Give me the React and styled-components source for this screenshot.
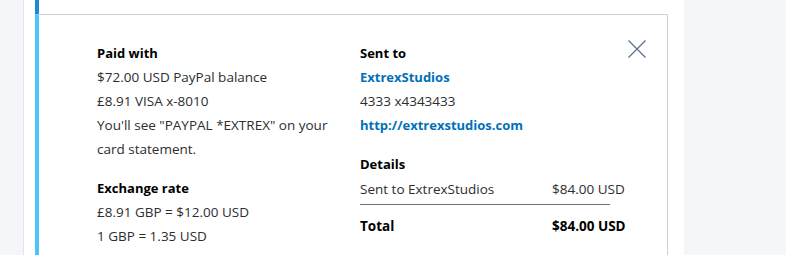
import React from "react";
import styled, { createGlobalStyle } from "styled-components";

const Global = createGlobalStyle`
  html, body { margin: 0; padding: 0; }
  body {
    background: #f5f6fa;
    font-family: "Open Sans", "Noto Sans", sans-serif;
    color: #2c2e2f;
    -webkit-font-smoothing: antialiased;
  }
  * { box-sizing: border-box; }
`;

const Page = styled.div`
  display: flex;
  height: 255px;
  overflow: hidden;
`;

const Main = styled.div`
  margin-left: 23px;
  width: 661px;
  background: #ffffff;
  border-left: 1px solid #e2e5e9;
  padding-left: 11px;
`;

const PrevRow = styled.div`
  height: 14px;
  width: 633px;
  border-left: 4px solid #1b8ad5;
`;

const Panel = styled.div`
  width: 633px;
  border-left: 4px solid #4cc4f8;
  border-top: 1px solid #cbd2d6;
  border-right: 1px solid #cbd2d6;
  padding: 26px 0 40px 58px;
  display: grid;
  grid-template-columns: 263px 268px 18px;
  font-size: 13.5px;
  line-height: 24px;
`;

const Column = styled.div`
  display: flex;
  flex-direction: column;
  padding-right: ${(p) => (p.$wrap ? "20px" : "0")};
`;

const Heading = styled.div`
  font-weight: 700;
  font-size: 13px;
  color: #000;
  margin-top: ${(p) => (p.$spaced ? "15px" : "0")};
  margin-bottom: ${(p) => (p.$tight ? "1px" : "0")};
`;

const Line = styled.div`
  color: #2c2e2f;
`;

const LinkText = styled.a`
  color: #0070ba;
  font-weight: 700;
  font-size: 13px;
  text-decoration: none;
`;

const DetailRow = styled.div`
  display: grid;
  grid-template-columns: 192px auto;
  font-weight: ${(p) => (p.$bold ? 700 : 400)};
  color: ${(p) => (p.$bold ? "#000" : "#2c2e2f")};
`;

const Divider = styled.div`
  width: 250px;
  height: 1px;
  background: #6c7378;
  margin: 3px 0 9px;
`;

const CloseButton = styled.button`
  all: unset;
  width: 18px;
  height: 18px;
  margin-top: -1px;
  cursor: pointer;
  display: block;
  svg { display: block; }
`;

export default function App() {
  return (
    <>
      <Global />
      <Page>
        <Main>
          <PrevRow />
          <Panel>
            <Column $wrap>
              <Heading>Paid with</Heading>
              <Line>$72.00 USD PayPal balance</Line>
              <Line>£8.91 VISA x-8010</Line>
              <Line>You'll see "PAYPAL *EXTREX" on your card statement.</Line>
              <Heading $spaced>Exchange rate</Heading>
              <Line>£8.91 GBP = $12.00 USD</Line>
              <Line>1 GBP = 1.35 USD</Line>
            </Column>
            <Column>
              <Heading>Sent to</Heading>
              <LinkText href="#">ExtrexStudios</LinkText>
              <Line>4333 x4343433</Line>
              <LinkText href="#">http://extrexstudios.com</LinkText>
              <Heading $spaced $tight>Details</Heading>
              <DetailRow>
                <span>Sent to ExtrexStudios</span>
                <span>$84.00 USD</span>
              </DetailRow>
              <Divider />
              <DetailRow $bold>
                <span>Total</span>
                <span>$84.00 USD</span>
              </DetailRow>
            </Column>
            <CloseButton aria-label="Close">
              <svg width="18" height="18" viewBox="0 0 18 18">
                <path d="M0.5 0.5 L17.5 17.5 M17.5 0.5 L0.5 17.5" stroke="#5b6f8a" strokeWidth="1.2" fill="none" />
              </svg>
            </CloseButton>
          </Panel>
        </Main>
      </Page>
    </>
  );
}
